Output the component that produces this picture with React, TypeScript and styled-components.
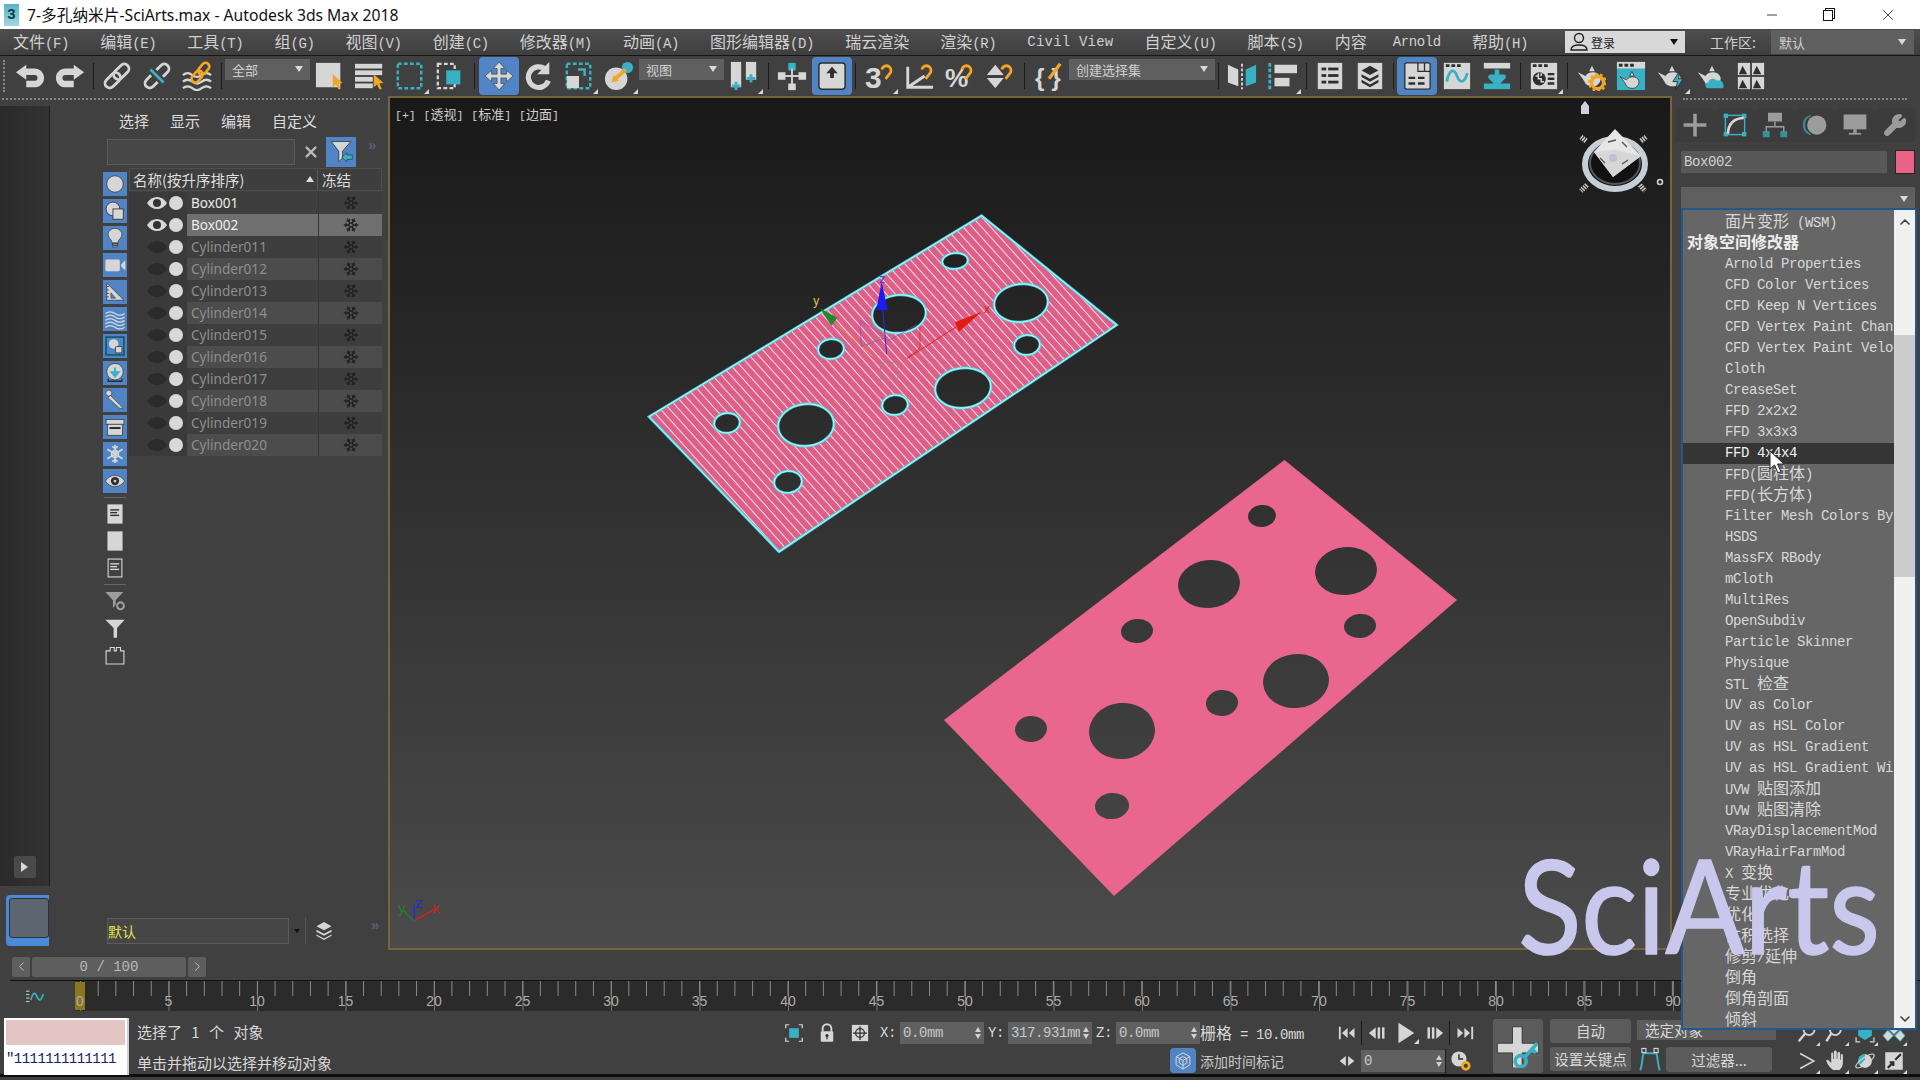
import React from "react";
import styled, { createGlobalStyle } from "styled-components";
import { ChevronDown, ChevronLeft, ChevronRight, ChevronUp, Minus, Snowflake, Wrench, X } from "lucide-react";

const L = "#d6d6d6";
const T = "#39b1c4";
const O = "#f2a527";
const D = "#2e2e2e";
const G = "#9c9c9c";

const cursor = (x: number, y: number) => (
  <path fill={O} d={`M${x} ${y}v14l3.5-3 2.5 5.5 2.5-1-2.5-5.5 4.5-.5z`} />
);
const hook = <path d="M19 9a5 5 0 1 1 8 5l-4 5" stroke={O} strokeWidth="3" fill="none" />;
const teapot = (fill: string) => (
  <g fill={fill}>
    <path d="M2 12l8 4c2-3 5-4 8-4 4 0 7 2 8 5 1 4-1 7-4 9-4 2-9 1-12-2-1-3-5-8-8-12z" />
    <path d="M14 11l3-6 3 6z" />
  </g>
);
const flake = (
  <g stroke={L} strokeWidth="2.4" fill="none">
    <path d="M16 3v26M5 9l22 14M27 9L5 23" />
    <circle cx="16" cy="16" r="5" />
    <path d="M12 5l4 3 4-3M12 27l4-3 4 3" />
  </g>
);
const docBars = (fill: string) => (
  <g fill={fill}>
    <rect x="9" y="9" width="13" height="2" />
    <rect x="9" y="13" width="10" height="2" />
    <rect x="9" y="17" width="13" height="2" />
  </g>
);

const glyphs: Record<string, React.ReactNode> = {
  undo: <path fill={L} d="M12 4L1 12l11 8v-5h9c2 0 3 1 3 3s-1 3-3 3H12v7h9c5 0 10-4 10-10S26 8 21 8h-9z" />,
  redo: <path fill={L} transform="matrix(-1 0 0 1 32 0)" d="M12 4L1 12l11 8v-5h9c2 0 3 1 3 3s-1 3-3 3H12v7h9c5 0 10-4 10-10S26 8 21 8h-9z" />,
  link: (
    <g transform="rotate(-45 16 16)" stroke={L} strokeWidth="3" fill="none">
      <rect x="0" y="11" width="19" height="10" rx="5" />
      <rect x="13" y="11" width="19" height="10" rx="5" />
    </g>
  ),
  unlink: (
    <g>
      <g transform="rotate(-45 16 16)" stroke={L} strokeWidth="3" fill="none">
        <path d="M12 11H5a5 5 0 0 0 0 10h7M20 11h7a5 5 0 0 1 0 10h-7" />
      </g>
      <path d="M9 9l14 14" stroke={T} strokeWidth="3" />
    </g>
  ),
  bind: (
    <g>
      <g stroke={L} strokeWidth="2.4" fill="none">
        <path d="M1 15q5-4 10 0t10 0 10 0M1 22q5-4 10 0t10 0 10 0M1 29q5-4 10 0t10 0 10 0" />
      </g>
      <g transform="rotate(-50 20 12)" stroke={O} strokeWidth="2.8" fill="none">
        <rect x="7" y="8" width="14" height="8" rx="4" />
        <rect x="18" y="8" width="14" height="8" rx="4" />
      </g>
    </g>
  ),
  select: (
    <g>
      <rect x="1" y="2" width="26" height="26" fill={L} />
      {cursor(19, 14)}
    </g>
  ),
  byName: (
    <g fill={L}>
      <rect x="0" y="3" width="29" height="5" />
      <rect x="0" y="10" width="29" height="5" />
      <rect x="0" y="17" width="19" height="5" />
      <rect x="0" y="24" width="19" height="5" />
      {cursor(20, 14)}
    </g>
  ),
  region: <rect x="3" y="3" width="25" height="26" fill="none" stroke={T} strokeWidth="2.6" strokeDasharray="4 2.5" />,
  crossing: (
    <g>
      <rect x="3" y="3" width="18" height="26" fill="none" stroke={L} strokeWidth="2.4" strokeDasharray="4 2.5" />
      <rect x="12" y="10" width="15" height="15" fill={T} />
    </g>
  ),
  move: (
    <path
      fill={L}
      stroke={D}
      strokeWidth=".6"
      d="M16 1l6 7h-4v6h6v-4l7 6-7 6v-4h-6v6h4l-6 7-6-7h4v-6H8v4l-7-6 7-6v4h6V8h-4z"
    />
  ),
  rotate: (
    <g>
      <path d="M23 9a11 11 0 1 0 3 12" stroke={L} strokeWidth="5.5" fill="none" />
      <path d="M27 1v13H14z" fill={L} />
    </g>
  ),
  scale: (
    <g>
      <rect x="3" y="3" width="25" height="26" fill="none" stroke={T} strokeWidth="2.6" strokeDasharray="4 2.5" />
      <rect x="3" y="16" width="13" height="13" fill={L} />
      <path d="M15 9h7v7" fill="none" stroke={T} strokeWidth="2.6" />
    </g>
  ),
  placement: (
    <g>
      <circle cx="13" cy="19" r="12" fill={L} />
      <circle cx="25" cy="7" r="6" fill={T} />
      <path d="M23 9L11 20" stroke={O} strokeWidth="4" />
      <path d="M8 23l2-8 6 6z" fill={O} />
    </g>
  ),
  pivot: (
    <g>
      <rect x="2" y="1" width="11" height="27" fill={L} />
      <rect x="18" y="1" width="11" height="19" fill={L} />
      <path d="M7.5 22v9M3 26.5h9M23.5 14v9M19 18.5h9" stroke={T} strokeWidth="3" />
    </g>
  ),
  manip: (
    <g fill={L}>
      <rect x="12" y="2" width="8" height="8" fill={T} />
      <rect x="1" y="12" width="8" height="8" />
      <rect x="23" y="12" width="8" height="8" />
      <rect x="12" y="24" width="8" height="7" />
      <rect x="15" y="8" width="2" height="18" />
      <rect x="7" y="15" width="18" height="2" />
    </g>
  ),
  keyboard: (
    <g>
      <rect x="2" y="2" width="28" height="28" rx="3" fill={L} stroke={D} strokeWidth="1.6" />
      <path d="M16 6l6 7h-4v5h-4v-5h-4z" fill={D} />
    </g>
  ),
  snap: (
    <g>
      <text x="1" y="29" fontSize="32" fontWeight="700" fontFamily="Liberation Sans" fill={L}>3</text>
      {hook}
    </g>
  ),
  angle: (
    <g>
      <path d="M4 6v22h27M4 28l18-12" stroke={L} strokeWidth="3" fill="none" />
      {hook}
    </g>
  ),
  percent: (
    <g>
      <text x="1" y="28" fontSize="28" fontWeight="700" fontFamily="Liberation Sans" fill={L}>%</text>
      {hook}
    </g>
  ),
  spinner: (
    <g fill={L}>
      <path d="M3 15l9-11 9 11zM3 18h18l-9 11z" />
      {hook}
    </g>
  ),
  named: (
    <g>
      <text x="1" y="27" fontSize="26" fontWeight="700" fontFamily="Liberation Sans" fill={L}>{"{ }"}</text>
      <path d="M16 19L28 3" stroke={O} strokeWidth="3.5" />
    </g>
  ),
  mirror: (
    <g>
      <path d="M1 4l11 5v18l-11-4z" fill={L} />
      <path d="M16 3v27" stroke={L} strokeWidth="2" strokeDasharray="3 2" />
      <path d="M20 9l11-5v19l-11 4z" fill={T} />
    </g>
  ),
  align: (
    <g>
      <path d="M3 2v28" stroke={T} strokeWidth="3" strokeDasharray="4 2" />
      <rect x="8" y="4" width="24" height="9" fill={L} />
      <rect x="8" y="18" width="16" height="9" fill={L} />
    </g>
  ),
  explorer: (
    <g>
      <rect x="3" y="2" width="26" height="28" fill={L} />
      <g fill={D}>
        <rect x="7" y="7" width="5" height="3" />
        <rect x="14" y="7" width="11" height="3" />
        <rect x="7" y="14" width="5" height="3" />
        <rect x="14" y="14" width="11" height="3" />
        <rect x="7" y="21" width="5" height="3" />
        <rect x="14" y="21" width="11" height="3" />
      </g>
    </g>
  ),
  layers: (
    <g>
      <rect x="3" y="2" width="26" height="28" fill={L} />
      <path d="M16 5l9 5-9 5-9-5zM7 14l9 5 9-5v3l-9 5-9-5zM7 20l9 5 9-5v3l-9 5-9-5z" fill={D} />
    </g>
  ),
  ribbon: (
    <g>
      <rect x="3" y="2" width="27" height="28" rx="2" fill={L} stroke={D} strokeWidth="1.4" />
      <path d="M17 2v9h13M24 2v9" stroke={D} strokeWidth="1.4" fill="none" />
      <path d="M7 18h7M17 18h7M7 24h7M17 24h7" stroke={D} strokeWidth="2.6" />
    </g>
  ),
  curve: (
    <g>
      <rect x="2" y="2" width="28" height="28" fill={L} />
      <path d="M4 5h4M10 5h4M16 5h4" stroke={D} strokeWidth="3" />
      <path d="M5 22c3-14 8-14 11-6s8 8 11-3" stroke={T} strokeWidth="3" fill="none" />
    </g>
  ),
  schematic: (
    <g>
      <rect x="2" y="2" width="28" height="6" fill={L} />
      <path d="M16 9l0 8m-7 0h14l-7 7z" stroke={T} strokeWidth="5" fill={T} strokeLinejoin="round" />
      <rect x="2" y="24" width="28" height="6" fill={T} />
    </g>
  ),
  material: (
    <g>
      <rect x="2" y="2" width="28" height="28" fill={L} />
      <path d="M4 5h4M10 5h4M16 5h4" stroke={D} strokeWidth="3" />
      <circle cx="11" cy="19" r="7" fill={D} />
      <path d="M7 16h3v3h3v3h3M10 13v3M13 13v3" stroke={L} strokeWidth="1.6" fill="none" />
      <path d="M20 14h7M20 19h7M20 24h7" stroke={D} strokeWidth="2.6" />
    </g>
  ),
  renderSetup: (
    <g>
      {teapot(L)}
      <circle cx="23" cy="23" r="6.5" fill="none" stroke={O} strokeWidth="3.6" />
      <circle cx="23" cy="23" r="9" fill="none" stroke={O} strokeWidth="2" strokeDasharray="3 2.6" />
    </g>
  ),
  framebuffer: (
    <g>
      <rect x="1" y="1" width="30" height="30" fill={T} />
      <rect x="1" y="1" width="30" height="7" fill={L} />
      <path d="M3 4.5h4M9 4.5h4M15 4.5h4" stroke={D} strokeWidth="3" />
      <g transform="translate(3 7) scale(.82)" stroke={D} strokeWidth="1">{teapot(L)}</g>
    </g>
  ),
  renderProd: (
    <g>
      {teapot(L)}
      <path d="M25 11l-7 11h5l-2 9 8-12h-5z" fill={T} stroke={D} />
    </g>
  ),
  renderCloud: (
    <g>
      {teapot(L)}
      <path d="M13 29c-4 0-4-6 0-6 1-5 7-5 9-2 4-2 9 2 7 8z" fill={T} />
    </g>
  ),
  gallery: (
    <g>
      <g fill={L}>
        <rect x="2" y="2" width="13" height="13" />
        <rect x="17" y="2" width="13" height="13" />
        <rect x="2" y="17" width="13" height="13" />
        <rect x="17" y="17" width="13" height="13" />
      </g>
      <path d="M3 14l4-9 5 9zM18 14l4-9 5 9zM3 29l4-9 5 9zM18 29l4-9 5 9z" fill={D} />
    </g>
  ),
  create: <path d="M14 3h4v11h11v4H18v11h-4V18H3v-4h11z" fill={G} />,
  modify: (
    <g>
      <rect x="5" y="5" width="22" height="22" fill="none" stroke={T} strokeWidth="1.6" />
      <g fill={T}>
        <rect x="3" y="3" width="5" height="5" />
        <rect x="24" y="3" width="5" height="5" />
        <rect x="3" y="24" width="5" height="5" />
        <rect x="24" y="24" width="5" height="5" />
      </g>
      <path d="M8 26C8 15 15 8 26 8" stroke={L} strokeWidth="3" fill="none" />
    </g>
  ),
  hierarchy: (
    <g>
      <rect x="8" y="2" width="16" height="10" fill={G} />
      <path d="M16 12v6M6 24v-6h20v6" stroke={G} strokeWidth="1.6" fill="none" />
      <rect x="2" y="23" width="8" height="7" fill={T} opacity=".7" />
      <rect x="22" y="23" width="8" height="7" fill={T} opacity=".7" />
    </g>
  ),
  motion: (
    <g>
      <path d="M11 5a12 12 0 0 0 0 22M7 7a12 12 0 0 0 0 18" stroke={T} strokeWidth="1.6" fill="none" opacity=".7" />
      <circle cx="18" cy="16" r="11" fill={G} />
    </g>
  ),
  display: (
    <g fill={G}>
      <rect x="3" y="4" width="26" height="17" />
      <rect x="14" y="21" width="4" height="4" />
      <rect x="9" y="25" width="14" height="2" />
    </g>
  ),
  geometry: <circle cx="16" cy="16" r="12" fill={L} stroke={D} strokeWidth="1" />,
  shapes: (
    <g stroke={D} strokeWidth="1.2">
      <circle cx="13" cy="13" r="10" fill={L} />
      <rect x="13" y="13" width="15" height="15" fill={L} />
    </g>
  ),
  light: (
    <g fill={L} stroke={D} strokeWidth="1">
      <path d="M16 2c6 0 10 4 10 9 0 5-5 7-6 12h-8c-1-5-6-7-6-12 0-5 4-9 10-9z" />
      <rect x="12" y="24" width="8" height="2" />
      <rect x="13" y="27" width="6" height="2" />
    </g>
  ),
  camera: (
    <g fill={L}>
      <rect x="2" y="8" width="21" height="17" rx="2" />
      <path d="M25 15l6-6v15l-6-6z" />
    </g>
  ),
  helper: (
    <g>
      <path d="M4 3l25 25H4z" fill={L} stroke={D} strokeWidth="1" />
      <path d="M10 17l7 8h-7z" fill="#5184c5" stroke={D} strokeWidth=".8" />
      <path d="M4 8h3M4 13h3M4 18h3M4 23h3" stroke={D} strokeWidth="1.2" />
    </g>
  ),
  warp: (
    <g stroke={L} strokeWidth="1.8" fill="none">
      <path d="M2 8q7-5 14 0t14 0M2 13q7-5 14 0t14 0M2 18q7-5 14 0t14 0M2 23q7-5 14 0t14 0M2 28q7-5 14 0t14 0" />
    </g>
  ),
  groups: (
    <g>
      <rect x="3" y="3" width="26" height="26" fill="none" stroke="#0d5c6a" strokeWidth="2.4" />
      <circle cx="14" cy="13" r="7" fill={L} />
      <rect x="17" y="17" width="9" height="9" fill={L} stroke={D} />
    </g>
  ),
  xrefs: (
    <g>
      <circle cx="16" cy="14" r="12" fill={L} stroke={D} />
      <path d="M16 8v7m-5 0h10l-5 6z" stroke={T} strokeWidth="3" fill={T} />
      <path d="M6 24v4h20v-4" stroke={D} strokeWidth="2" fill="none" />
    </g>
  ),
  bones: (
    <g>
      <circle cx="7" cy="6" r="4.5" fill={L} stroke={D} />
      <path d="M9 9l19 19-5 0L6 13z" fill={L} stroke={D} strokeWidth=".8" />
    </g>
  ),
  container: (
    <g>
      <rect x="3" y="5" width="26" height="7" fill={L} stroke={D} />
      <rect x="5" y="12" width="22" height="16" fill={L} stroke={D} />
      <rect x="8" y="16" width="16" height="3" fill={D} />
    </g>
  ),
  frozen: flake,
  hidden: (
    <g>
      <path d="M2 16c7-11 21-11 28 0-7 11-21 11-28 0z" fill={L} stroke={D} />
      <circle cx="16" cy="16" r="6" fill={D} />
      <circle cx="16" cy="16" r="2" fill={L} />
    </g>
  ),
  docFill: (
    <g>
      <rect x="5" y="2" width="22" height="28" fill={L} />
      {docBars(D)}
    </g>
  ),
  blank: <rect x="5" y="2" width="22" height="28" fill={L} />,
  docOutline: (
    <g>
      <rect x="6" y="3" width="20" height="26" fill="none" stroke={L} strokeWidth="1.6" />
      {docBars(L)}
    </g>
  ),
  funnelGear: (
    <g fill={G}>
      <path d="M2 3h26L17 15v6l-4 5V15z" />
      <circle cx="24" cy="23" r="5" fill="none" stroke={G} strokeWidth="3" />
    </g>
  ),
  funnel: <path d="M2 4h28L19 16v14h-5V16z" fill={L} />,
  puzzle: <path d="M3 10h6V5h6v5h3V5h6v5h5v19H3z" fill="none" stroke={L} strokeWidth="1.6" />,
  filterPick: (
    <g>
      <path d="M3 2h26L18 15v9l-5 5V15z" fill={L} stroke={D} strokeWidth="1" />
      <path d="M17 23l7-6v3h7v6h-7v3z" fill={T} stroke={D} strokeWidth=".8" />
    </g>
  ),
  stack: <path d="M16 3l11 6-11 6-11-6zM5 14l11 6 11-6v3l-11 6-11-6zM5 21l11 6 11-6v2l-11 6-11-6z" fill={L} />,
  wave: (
    <g>
      <path d="M3 9h5M3 14h5M3 19h5M3 24h5" stroke={L} strokeWidth="1.4" />
      <path d="M10 22c3-12 6-12 9-5s6 6 9-4" stroke={T} strokeWidth="2.4" fill="none" />
    </g>
  ),
  isolate: (
    <g>
      <path d="M4 9V4h5M23 4h5v5M28 23v5h-5M9 28H4v-5" stroke={L} strokeWidth="1.8" fill="none" />
      <rect x="9" y="9" width="14" height="14" fill={T} />
    </g>
  ),
  lock: (
    <g>
      <path d="M9 14V9a7 7 0 0 1 14 0v5" stroke={L} strokeWidth="3" fill="none" />
      <rect x="6" y="13" width="20" height="17" rx="2" fill={L} />
      <circle cx="16" cy="20" r="2.4" fill={D} />
      <rect x="15" y="20" width="2" height="6" fill={D} />
    </g>
  ),
  absolute: (
    <g>
      <rect x="3" y="3" width="26" height="26" fill={L} />
      <circle cx="16" cy="16" r="7" fill="none" stroke={D} strokeWidth="2" />
      <path d="M16 5v22M5 16h22" stroke={D} strokeWidth="2" />
    </g>
  ),
  timeTag: (
    <g fill="none" stroke={L} strokeWidth="1.6">
      <path d="M16 3l11 6v13l-11 7-11-7V9z" />
      <path d="M5 9l11 6 11-6M16 15v14M10 12l6-3 6 3v7l-6 4-6-4z" />
    </g>
  ),
  toStart: (
    <g fill={L}>
      <rect x="3" y="6" width="3" height="20" />
      <path d="M17 8v16l-9-8zM28 8v16l-9-8z" />
    </g>
  ),
  prevFrame: (
    <g fill={L}>
      <path d="M14 7v18L3 16z" />
      <rect x="17" y="7" width="4" height="18" />
      <rect x="24" y="7" width="4" height="18" />
    </g>
  ),
  play: <path d="M5 1v30l23-15z" fill={L} />,
  nextFrame: (
    <g fill={L}>
      <rect x="4" y="7" width="4" height="18" />
      <rect x="11" y="7" width="4" height="18" />
      <path d="M18 7v18l11-9z" />
    </g>
  ),
  toEnd: (
    <g fill={L}>
      <path d="M4 8v16l9-8zM15 8v16l9-8z" />
      <rect x="26" y="6" width="3" height="20" />
    </g>
  ),
  keyMode: <path d="M14 7v18L3 16zM18 7v18l11-9z" fill={L} />,
  timeConfig: (
    <g>
      <circle cx="13" cy="13" r="11" fill={L} />
      <path d="M13 6v7h6" stroke={D} strokeWidth="2" fill="none" />
      <circle cx="23" cy="23" r="5" fill="none" stroke={O} strokeWidth="4" />
    </g>
  ),
  bigKey: (
    <g>
      <path d="M12 2h7v12h12v7H19v11h-7V21H1v-7h11z" fill={L} stroke={D} strokeWidth=".6" />
      <g stroke={T} strokeWidth="2.6" fill="none">
        <circle cx="18" cy="27" r="4" />
        <path d="M21 24l9-10M26 18l3 3" />
      </g>
    </g>
  ),
  tangent: (
    <g stroke={T} strokeWidth="2.4" fill="none">
      <path d="M4 30c3-8 2-14 4-21h16c2 7 1 13 4 21" />
      <rect x="6" y="3" width="5" height="5" stroke={L} strokeWidth="1.4" />
      <rect x="21" y="3" width="5" height="5" stroke={L} strokeWidth="1.4" />
    </g>
  ),
  zoom: (
    <g>
      <circle cx="19" cy="11" r="8" fill="none" stroke={L} strokeWidth="2.6" />
      <path d="M13 17L4 28" stroke={L} strokeWidth="3.4" />
    </g>
  ),
  zoomAll: (
    <g>
      <circle cx="15" cy="11" r="8" fill="none" stroke={L} strokeWidth="2.6" />
      <path d="M9 17L2 28" stroke={L} strokeWidth="3.4" />
      <rect x="24" y="3" width="6" height="6" fill={T} />
    </g>
  ),
  zoomExt: (
    <g>
      <path d="M16 2l10 6v12l-10 6-10-6V8z" fill={T} />
      <path d="M3 22v7h6M29 22v7h-6" stroke={L} strokeWidth="1.8" fill="none" />
    </g>
  ),
  zoomExtAll: <path d="M16 2l8 8-8 8-8-8zM7 12l8 8-8 8-7-8zM25 12l7 8-7 8-8-8z" fill={L} stroke={T} strokeWidth="1.4" />,
  fov: <path d="M5 4l22 12L5 28" stroke={L} strokeWidth="2.4" fill="none" />,
  pan: (
    <path
      fill={L}
      d="M12 29c-4-2-9-9-10-13 0-2 2-2 3-1l4 4V6c0-3 3-3 3 0v7h1V3c0-3 4-3 4 0v10h1V5c0-3 4-3 4 0v9h1V8c0-3 3-3 3 0v11c0 4-2 8-5 10z"
    />
  ),
  orbit: (
    <g>
      <circle cx="16" cy="16" r="10" fill={L} />
      <path d="M16 6a10 10 0 0 0-8 16l8-8z" fill={T} />
      <ellipse cx="16" cy="16" rx="16" ry="5" transform="rotate(-35 16 16)" fill="none" stroke={L} strokeWidth="1.6" />
    </g>
  ),
  maximize: (
    <g>
      <rect x="2" y="2" width="28" height="28" fill={L} />
      <path d="M6 27l9-9m-6 0h6v6M27 5l-9 9" stroke={D} strokeWidth="3.4" fill="none" />
    </g>
  ),
};

const Icon: React.FC<{ name: string; size?: number }> = ({ name, size = 30 }) => (
  <svg width={size} height={size} viewBox="0 0 32 32">
    {glyphs[name]}
  </svg>
);

const GlobalStyle = createGlobalStyle`
  html, body {
    margin: 0;
    background: #404040;
  }
  * {
    box-sizing: border-box;
  }
`;

const Han = styled.span`
  font-family: "Noto Sans CJK SC", sans-serif;
  font-size: var(--han, 16px);
  letter-spacing: 0;
  line-height: 1;
`;

// old 3ds max menus mix 16px hanzi with half width latin, so the two get separate sizes
const Mixed: React.FC<{ text: string }> = ({ text }) => (
  <>
    {text.split(/([\u3400-\u9fff]+)/).map((part, i) =>
      /[\u3400-\u9fff]/.test(part) ? <Han key={i}>{part}</Han> : part
    )}
  </>
);

const Frame = styled.div`
  position: relative;
  width: 1920px;
  height: 1080px;
  overflow: hidden;
  display: flex;
  flex-direction: column;
  background: #404040;
  color: #d2d2d2;
`;

const TitleBar = styled.div`
  height: 29px;
  flex: none;
  background: #ffffff;
  display: flex;
  align-items: center;
  padding-left: 4px;
  color: #111111;
  font: 15.7px "Noto Sans", "Noto Sans CJK SC", sans-serif;
`;

const AppBadge = styled.div`
  width: 15px;
  height: 22px;
  margin-right: 8px;
  background: linear-gradient(#58b4c4, #9fd8e0);
  color: #10404c;
  font: 700 15px/20px "Liberation Sans", sans-serif;
  text-align: center;
`;

const WindowControls = styled.div`
  margin-left: auto;
  display: flex;
  margin-right: 3px;
`;

const WindowButton = styled.div`
  width: 58px;
  height: 29px;
  display: flex;
  align-items: center;
  justify-content: center;
`;

const RestoreGlyph = styled.div`
  width: 10px;
  height: 11px;
  margin-right: 4px;
  border: 1px solid #111111;
  box-shadow: 2px -2px 0 -1px #ffffff, 2px -2px 0 0 #111111;
  margin-top: 2px;
`;

const MenuBar = styled.div`
  height: 27px;
  flex: none;
  display: flex;
  align-items: center;
  padding-left: 13px;
  gap: 31.1px;
  background: linear-gradient(#4e4e4e, #3e3e3e);
  border-bottom: 1px solid #161616;
`;

const MenuItem = styled.div<{ $wide?: boolean; $tuck?: boolean }>`
  white-space: nowrap;
  color: #d0d0d0;
  font: 14px "Liberation Mono", monospace;
  letter-spacing: ${({ $wide }) => ($wide ? "0.2px" : "-0.4px")};
  margin-left: ${({ $tuck }) => ($tuck ? "-5px" : "0")};
`;

const MenuRight = styled.div`
  margin-left: auto;
  display: flex;
  align-items: center;
  margin-right: 6px;
`;

const LoginBox = styled.div`
  width: 120px;
  height: 22px;
  background: #d8d8d8;
  display: flex;
  align-items: center;
  padding: 0 7px 0 5px;
  gap: 3px;
  color: #222222;
  font: 12px "Noto Sans CJK SC", sans-serif;
  margin-right: 25px;
`;

const ArrowDown = styled.i<{ $color?: string }>`
  margin-left: auto;
  width: 0;
  height: 0;
  border-left: 4.5px solid transparent;
  border-right: 4.5px solid transparent;
  border-top: 6px solid ${({ $color }) => $color || "#d8d8d8"};
`;

const WorkspaceLabel = styled.div`
  font: 14px "Noto Sans CJK SC", sans-serif;
  color: #d0d0d0;
  margin-right: 3px;
  width: 58px;
  white-space: nowrap;
`;

const Combo = styled.div<{ $w: number; $h?: number }>`
  width: ${({ $w }) => $w}px;
  height: ${({ $h }) => $h || 22}px;
  flex: none;
  background: #5f5f5f;
  display: flex;
  align-items: center;
  padding: 0 8px;
  color: #cfcfcf;
  font: 13px "Noto Sans CJK SC", sans-serif;
`;

const ToolbarRow = styled.div`
  height: 40px;
  flex: none;
  display: flex;
  align-items: center;
  padding-left: 10px;
  background: #404040;
  position: relative;
`;

const Grip = styled.div`
  position: absolute;
  left: 3px;
  top: 4px;
  bottom: 4px;
  width: 4px;
  border-left: 2px dotted #8a8a8a;
`;

const ToolButton = styled.div<{ $on?: boolean; $fly?: boolean }>`
  width: 40px;
  height: 38px;
  flex: none;
  position: relative;
  display: flex;
  align-items: center;
  justify-content: center;
  border-radius: 4px;
  background: ${({ $on }) => ($on ? "#5184c5" : "transparent")};

  &::after {
    content: "";
    display: ${({ $fly }) => ($fly ? "block" : "none")};
    position: absolute;
    right: 1px;
    bottom: 1px;
    border-left: 5px solid transparent;
    border-bottom: 5px solid #d8d8d8;
  }
`;

const ToolSep = styled.div<{ $w: number }>`
  width: ${({ $w }) => $w}px;
  height: 26px;
  flex: none;
  display: flex;
  justify-content: center;

  &::before {
    content: "";
    width: 1px;
    background: #1c1c1c;
  }
`;

const ToolCombo = styled(Combo)`
  height: 21px;
  margin-top: -14px;
  padding: 0 7px;
`;

const Workspace = styled.div`
  height: 854px;
  flex: none;
  display: grid;
  grid-template-columns: 388px 1284px 248px;
`;

const LeftPanel = styled.div`
  display: flex;
  flex-direction: column;
  min-height: 0;
`;

const DottedRule = styled.div`
  height: 0;
  margin: 2px 8px 0 2px;
  border-top: 2px dotted #8a8a8a;
`;

const LeftBody = styled.div`
  flex: 1;
  display: flex;
  min-height: 0;
`;

const Rail = styled.div`
  width: 50px;
  flex: none;
  display: flex;
  flex-direction: column;
  padding-top: 6px;
`;

const RailStrip = styled.div`
  height: 780px;
  background: linear-gradient(90deg, #2a2a2a, #333333);
  border-right: 1px solid #1b1b1b;
  display: flex;
  flex-direction: column;
  justify-content: flex-end;
  align-items: center;
  padding-bottom: 8px;
`;

const RailPlay = styled.div`
  width: 22px;
  height: 22px;
  background: #4a4a4a;
  display: flex;
  align-items: center;
  justify-content: center;
  border-radius: 2px;

  &::before {
    content: "";
    border-left: 7px solid #d8d8d8;
    border-top: 5px solid transparent;
    border-bottom: 5px solid transparent;
  }
`;

const ViewPreview = styled.div`
  width: 43px;
  height: 51px;
  margin: 9px 0 0 6px;
  background: #4c8ad8;
  border-radius: 4px 0 0 4px;
  padding: 3px 2px 10px 3px;

  &::before {
    content: "";
    display: block;
    width: 100%;
    height: 100%;
    background: #5c6570;
    border: 1px solid #2b3340;
    border-radius: 3px;
  }
`;

const Explorer = styled.div`
  flex: 1;
  min-width: 0;
  display: flex;
  flex-direction: column;
  padding-left: 53px;
`;

const ExplorerMenu = styled.div`
  display: flex;
  gap: 21px;
  padding: 10px 0 0 16px;
  height: 37px;
  color: #dcdcdc;
  font: 15px "Noto Sans CJK SC", sans-serif;
`;

const SearchRow = styled.div`
  display: flex;
  align-items: center;
  height: 30px;
  padding-left: 4px;
`;

const SearchInput = styled.div`
  width: 188px;
  height: 26px;
  background: #474747;
  border: 1px solid #5a5a5a;
`;

const ClearGlyph = styled.div`
  width: 31px;
  display: flex;
  justify-content: center;
  color: #bdbdbd;
`;

const FilterButton = styled.div`
  width: 30px;
  height: 30px;
  background: #5184c5;
  display: flex;
  align-items: center;
  justify-content: center;
`;

const Chevrons = styled.div<{ $gap: number }>`
  align-self: flex-start;
  font: 700 15px/16px "Liberation Sans", sans-serif;
  color: #55607a;
  margin-left: ${({ $gap }) => $gap}px;
`;

const TreeRow = styled.div`
  display: flex;
  gap: 2px;
  padding-top: 1px;
`;

const ToolColumn = styled.div`
  width: 24px;
  flex: none;
  display: flex;
  flex-direction: column;
  padding-top: 4px;
  gap: 3px;
`;

const CategoryButton = styled.div`
  width: 24px;
  height: 24px;
  flex: none;
  background: #5184c5;
  display: flex;
  align-items: center;
  justify-content: center;
`;

const PlainCategory = styled.div`
  width: 24px;
  height: 24px;
  flex: none;
  display: flex;
  align-items: center;
  justify-content: center;
`;

const CategoryRule = styled.div`
  height: 1px;
  margin: 1px 1px;
  background: #666666;
  flex: none;
`;

const SceneTable = styled.div`
  width: 253px;
  flex: none;
`;

const TableHeader = styled.div`
  height: 23px;
  margin-bottom: 1px;
  display: flex;
  align-items: center;
  background: #3e3e3e;
  border: 1px solid #4e4e4e;
  color: #dedede;
  font: 14.5px "Noto Sans CJK SC", sans-serif;
`;

const HeaderName = styled.div`
  flex: 1;
  padding-left: 3px;
  position: relative;
  white-space: nowrap;

  &::after {
    content: "";
    position: absolute;
    right: 3px;
    top: 7px;
    border-left: 4px solid transparent;
    border-right: 4px solid transparent;
    border-bottom: 6px solid #dedede;
  }
`;

const HeaderFreeze = styled.div`
  width: 64px;
  padding-left: 4px;
  border-left: 1px solid #5a5a5a;
`;

const SceneRow = styled.div<{ $alt?: boolean; $selected?: boolean; $frozen?: boolean }>`
  height: 22px;
  display: flex;
  background: ${({ $selected, $alt }) => ($selected ? "#6f6f6f" : $alt ? "#4c4c4c" : "#3e3e3e")};
  color: ${({ $frozen }) => ($frozen ? "#8e8e8e" : "#eeeeee")};
  font: 13.6px/22px "Noto Sans", sans-serif;
`;

const RowControls = styled.div`
  width: 58px;
  flex: none;
  background: #3a3a3a;
  display: flex;
  align-items: center;
  padding-left: 18px;
  gap: 2px;
`;

const Sphere = styled.i`
  width: 14px;
  height: 14px;
  border-radius: 50%;
  background: #d8d8d8;
`;

const RowName = styled.div`
  flex: 1;
  padding-left: 4px;
`;

const RowFreeze = styled.div`
  width: 64px;
  flex: none;
  border-left: 1px solid #353535;
  display: flex;
  align-items: center;
  justify-content: center;
`;

const LayerFooter = styled.div`
  margin-top: auto;
  margin-bottom: 6px;
  display: flex;
  align-items: center;
  padding-left: 4px;
  height: 27px;
`;

const LayerInput = styled.div`
  width: 182px;
  height: 26px;
  background: #464646;
  border: 1px solid #5c5c5c;
  color: #e0e048;
  font: 14px/24px "Noto Sans CJK SC", sans-serif;
`;

const LayerArrow = styled.div`
  width: 17px;
  height: 27px;
  display: flex;
  align-items: center;
  justify-content: center;
  border-right: 1px solid #565656;

  &::before {
    content: "";
    border-left: 3px solid transparent;
    border-right: 3px solid transparent;
    border-top: 4px solid #111111;
  }
`;

const LayerIcon = styled.div`
  width: 36px;
  display: flex;
  justify-content: center;
`;

const Viewport = styled.div`
  position: relative;
  border: 2px solid #75643c;
  background: linear-gradient(#191919, #4b4b4b);
`;

const ViewportArt = styled.svg`
  position: absolute;
  left: -2px;
  top: -2px;
`;

const ViewportLabel = styled.div`
  --han: 13px;
  position: absolute;
  left: 5px;
  top: 9px;
  color: #cfcfcf;
  font: 11.5px "Liberation Mono", monospace;
  word-spacing: 1px;
`;

const CommandPanel = styled.div`
  position: relative;
  display: flex;
  flex-direction: column;
  padding: 0 5px 0 9px;
`;

const CommandTabs = styled.div`
  height: 34px;
  margin: 8px 0 0 -6px;
  display: flex;
`;

const CommandTab = styled.div`
  width: 40px;
  background: #3c3c3c;
  border-radius: 6px 6px 0 0;
  display: flex;
  align-items: center;
  justify-content: center;
`;

const NameRow = styled.div`
  display: flex;
  justify-content: space-between;
  margin-top: 9px;
`;

const NameField = styled.div`
  width: 206px;
  height: 22px;
  background: #585858;
  padding-left: 3px;
  color: #cfcfcf;
  font: 14px/22px "Liberation Mono", monospace;
  letter-spacing: -0.4px;
`;

const Swatch = styled.div`
  width: 20px;
  height: 24px;
  margin-top: -1px;
  background: #e96389;
  border: 1px solid #262626;
`;

const ModifierCombo = styled.div`
  height: 23px;
  margin-top: 13px;
  background: #5f5f5f;
  display: flex;
  align-items: center;
  padding-right: 7px;
`;

const ModifierList = styled.div`
  position: absolute;
  z-index: 5;
  left: 9px;
  top: 112px;
  width: 236px;
  height: 822px;
  background: #666666;
  border: 2px solid #23588c;
  display: flex;
`;

const ModifierRows = styled.div`
  flex: 1;
  min-width: 0;
  overflow: hidden;
  padding-top: 2px;
`;

const ModifierRow = styled.div<{ $hot?: boolean; $category?: boolean }>`
  height: 21px;
  padding-left: ${({ $category }) => ($category ? "4px" : "42px")};
  background: ${({ $hot }) => ($hot ? "#353535" : "transparent")};
  color: ${({ $hot, $category }) => ($hot ? "#f2f2f2" : $category ? "#ececec" : "#d8d8d8")};
  font: ${({ $category }) => ($category ? 700 : 400)} 14px/21px "Liberation Mono", monospace;
  letter-spacing: -0.4px;
  white-space: nowrap;
`;

const ScrollBar = styled.div`
  width: 21px;
  flex: none;
  background: #f0f0f0;
  display: flex;
  flex-direction: column;
  align-items: center;
  color: #404040;
`;

const ScrollThumb = styled.div`
  width: 100%;
  height: 242px;
  margin-top: 104px;
  background: #cdcdcd;
`;

const ScrollEnd = styled.div`
  margin-top: auto;
  height: 17px;
`;

const ScrollStart = styled.div`
  height: 17px;
  margin-top: 4px;
`;

const Pointer = styled.svg`
  position: absolute;
  z-index: 6;
  left: 97px;
  top: 354px;
`;

const TimelineWrap = styled.div`
  height: 62px;
  flex: none;
  display: flex;
  flex-direction: column;
`;

const SliderRow = styled.div`
  height: 31px;
  display: flex;
  align-items: center;
  padding: 3px 0 0 2px;
  gap: 2px;
  border-bottom: 1px solid #101010;
  margin-left: 10px;
`;

const SliderEnd = styled.div`
  width: 18px;
  height: 20px;
  background: #5e5e5e;
  border-radius: 2px;
  display: flex;
  align-items: center;
  justify-content: center;
  color: #c8c8c8;
`;

const SliderBar = styled.div`
  width: 154px;
  height: 20px;
  background: #5e5e5e;
  border-radius: 2px;
  text-align: center;
  color: #b8b8b8;
  font: 14px/20px "Liberation Mono", monospace;
  white-space: pre;
`;

const RulerRow = styled.div`
  height: 30px;
  display: flex;
`;

const RulerLead = styled.div`
  width: 75px;
  flex: none;
  display: flex;
  align-items: center;
  padding-left: 24px;
`;

const RulerTrack = styled.div`
  position: relative;
  width: 1615px;
  flex: none;
  overflow: hidden;
  background: linear-gradient(90deg, #8a8a8a 1px, transparent 1px) 5px 0 / 17.7px 15px repeat-x,
    linear-gradient(90deg, #777777 1px, transparent 1px) 5px 0 / 88.5px 30px repeat-x, #2b2b2b;
`;

const RulerThumb = styled.div`
  position: absolute;
  left: 0;
  top: 1px;
  width: 10px;
  height: 28px;
  background: #8a7720;
`;

const RulerLabels = styled.div`
  position: relative;
  display: flex;
  margin-left: -39.25px;
`;

const RulerLabel = styled.div`
  width: 88.5px;
  flex: none;
  text-align: center;
  padding-top: 11px;
  color: #adadad;
  font: 14px/18px "Liberation Sans", sans-serif;
`;

const StatusBar = styled.div`
  height: 65px;
  flex: none;
  display: flex;
  border-bottom: 3px solid #0d0d0d;
  padding-top: 6px;
`;

const Listener = styled.div`
  width: 125px;
  height: 57px;
  flex: none;
  margin-left: 4px;
  background: #ffffff;
  border-right: 2px solid #cfcfcf;
  padding: 2px;
  display: flex;
  flex-direction: column;
  gap: 2px;
`;

const ListenerTop = styled.div`
  height: 25px;
  background: #e3c5c3;
`;

const ListenerBottom = styled.div`
  flex: 1;
  color: #16206a;
  font: 14px/24px "Liberation Mono", monospace;
  letter-spacing: -0.55px;
  white-space: nowrap;
`;

const Prompt = styled.div`
  width: 648px;
  flex: none;
  padding-left: 8px;
  display: flex;
  flex-direction: column;
  gap: 10px;
  padding-top: 3px;
  color: #d8d8d8;
  font: 15px/21px "Noto Sans CJK SC", sans-serif;
  word-spacing: 6px;
`;

const CoordColumn = styled.div`
  width: 526px;
  flex: none;
  display: flex;
  flex-direction: column;
`;

const CoordRow = styled.div`
  height: 24px;
  margin-top: 3px;
  display: flex;
  align-items: center;
`;

const CoordIcon = styled.div`
  width: 33px;
  flex: none;
  display: flex;
  justify-content: center;
`;

const AxisLabel = styled.div`
  width: 20px;
  flex: none;
  margin-left: 4px;
  font: 14px "Liberation Mono", monospace;
  letter-spacing: -0.4px;
  color: #d8d8d8;
`;

const SpinInput = styled.div`
  width: 84px;
  height: 22px;
  flex: none;
  background: #606060;
  display: flex;
  align-items: center;
  padding-left: 3px;
  color: #c8c8c8;
  font: 14px "Liberation Mono", monospace;
  letter-spacing: -0.4px;
  overflow: hidden;
  white-space: nowrap;
`;

const SpinText = styled.div`
  flex: 1;
  min-width: 0;
  overflow: hidden;
`;

const SpinArrows = styled.div`
  width: 12px;
  flex: none;
  display: flex;
  flex-direction: column;
  align-items: center;
  gap: 2px;

  &::before,
  &::after {
    content: "";
    border-left: 3px solid transparent;
    border-right: 3px solid transparent;
  }
  &::before {
    border-bottom: 5px solid #d0d0d0;
  }
  &::after {
    border-top: 5px solid #d0d0d0;
  }
`;

const GridText = styled.div`
  margin-left: 0;
  color: #d8d8d8;
  font: 14px "Liberation Mono", monospace;
  letter-spacing: -0.4px;
  white-space: pre;
`;

const TagRow = styled.div`
  display: flex;
  align-items: center;
  padding-left: 393px;
  margin-top: 3px;
  height: 25px;
  color: #c8c8c8;
  font: 14px "Noto Sans CJK SC", sans-serif;
  white-space: nowrap;
`;

const TagButton = styled.div`
  width: 26px;
  height: 25px;
  margin-right: 4px;
  background: #5184c5;
  border-radius: 4px;
  display: flex;
  align-items: center;
  justify-content: center;
`;

const PlaybackColumn = styled.div`
  width: 161px;
  flex: none;
  margin-left: 29px;
`;

const PlaybackRow = styled.div`
  height: 26px;
  margin-top: 2px;
  display: flex;
  align-items: center;
`;

const PlayButton = styled.div<{ $w?: number; $fly?: boolean }>`
  width: ${({ $w }) => $w || 29}px;
  flex: none;
  position: relative;
  display: flex;
  justify-content: center;

  &::after {
    content: "";
    display: ${({ $fly }) => ($fly ? "block" : "none")};
    position: absolute;
    right: 1px;
    bottom: 0;
    border-left: 5px solid transparent;
    border-bottom: 5px solid #d8d8d8;
  }
`;

const PlayDivider = styled.div`
  width: 1px;
  height: 24px;
  flex: none;
  background: #1c1c1c;
`;

const BigKeyButton = styled.div`
  width: 50px;
  height: 54px;
  flex: none;
  margin: 1px 7px 0 0;
  background: #5c5c5c;
  border-radius: 3px;
  display: flex;
  align-items: center;
  justify-content: center;
`;

const KeyColumn = styled.div`
  width: 81px;
  flex: none;
  display: flex;
  flex-direction: column;
  gap: 4px;
  margin-top: 1px;
`;

const KeyButton = styled.div`
  height: 24px;
  background: #5c5c5c;
  border-radius: 3px;
  text-align: center;
  color: #d8d8d8;
  font: 14.5px/24px "Noto Sans CJK SC", sans-serif;
  white-space: nowrap;
`;

const KeyRight = styled.div`
  width: 146px;
  flex: none;
  margin-left: 6px;
`;

const KeyTarget = styled.div`
  width: 139px;
  height: 20px;
  margin-top: 2px;
  background: #5c5c5c;
  padding-left: 8px;
  color: #d8d8d8;
  font: 14.5px/20px "Noto Sans CJK SC", sans-serif;
`;

const KeyFilterRow = styled.div`
  display: flex;
  align-items: center;
  margin-top: 6px;
`;

const KeyFilter = styled.div`
  width: 106px;
  height: 25px;
  margin-left: 3px;
  background: #5c5c5c;
  border-radius: 3px;
  text-align: center;
  color: #d8d8d8;
  font: 14.5px/25px "Noto Sans CJK SC", sans-serif;
  white-space: nowrap;
`;

const NavGrid = styled.div`
  display: grid;
  grid-template-columns: repeat(4, 29px);
  grid-auto-rows: 26px;
  margin-left: 9px;
  margin-top: 2px;
  row-gap: 2px;
`;

const NavButton = styled.div`
  position: relative;
  display: flex;
  align-items: center;
  justify-content: center;

  &::after {
    content: "";
    position: absolute;
    right: 1px;
    bottom: 0;
    border-left: 4px solid transparent;
    border-bottom: 4px solid #d8d8d8;
  }
`;

const Watermark = styled.svg`
  position: absolute;
  z-index: 10;
  left: 1500px;
  top: 840px;
  pointer-events: none;
`;

const MENU = [
  "文件(F)",
  "编辑(E)",
  "工具(T)",
  "组(G)",
  "视图(V)",
  "创建(C)",
  "修改器(M)",
  "动画(A)",
  "图形编辑器(D)",
  "瑞云渲染",
  "渲染(R)",
  "Civil View",
  "自定义(U)",
  "脚本(S)",
  "内容",
  "Arnold",
  "帮助(H)",
];

const ROWS = [
  "Box001",
  "Box002",
  "Cylinder011",
  "Cylinder012",
  "Cylinder013",
  "Cylinder014",
  "Cylinder015",
  "Cylinder016",
  "Cylinder017",
  "Cylinder018",
  "Cylinder019",
  "Cylinder020",
];

const CATEGORIES = [
  "geometry",
  "shapes",
  "light",
  "camera",
  "helper",
  "warp",
  "groups",
  "xrefs",
  "bones",
  "container",
  "frozen",
  "hidden",
];

const MODIFIERS = [
  "面片变形 (WSM)",
  "对象空间修改器",
  "Arnold Properties",
  "CFD Color Vertices",
  "CFD Keep N Vertices",
  "CFD Vertex Paint Channel",
  "CFD Vertex Paint Velocity",
  "Cloth",
  "CreaseSet",
  "FFD 2x2x2",
  "FFD 3x3x3",
  "FFD 4x4x4",
  "FFD(圆柱体)",
  "FFD(长方体)",
  "Filter Mesh Colors By",
  "HSDS",
  "MassFX RBody",
  "mCloth",
  "MultiRes",
  "OpenSubdiv",
  "Particle Skinner",
  "Physique",
  "STL 检查",
  "UV as Color",
  "UV as HSL Color",
  "UV as HSL Gradient",
  "UV as HSL Gradient With",
  "UVW 贴图添加",
  "UVW 贴图清除",
  "VRayDisplacementMod",
  "VRayHairFarmMod",
  "X 变换",
  "专业优化",
  "优化",
  "体积选择",
  "修剪/延伸",
  "倒角",
  "倒角剖面",
  "倾斜",
];

type Hole = [number, number, number, number];

// page coordinates, read off the screenshot
const HOLES_A: Hole[] = [
  [955, 261, 13, 8],
  [1021, 303, 27, 19],
  [1027, 345, 13, 10],
  [899, 314, 27, 19],
  [831, 349, 13, 10],
  [963, 388, 28, 20],
  [895, 405, 13, 10],
  [727, 423, 13, 10],
  [806, 425, 28, 21],
  [788, 482, 14, 11],
];

const HOLES_B: Hole[] = [
  [1262, 516, 14, 11],
  [1346, 571, 31, 24],
  [1360, 626, 16, 12],
  [1209, 584, 31, 24],
  [1137, 631, 16, 12],
  [1296, 681, 33, 27],
  [1222, 703, 16, 13],
  [1031, 729, 16, 13],
  [1122, 731, 33, 28],
  [1112, 806, 17, 13],
];

const ringPath = ([cx, cy, rx, ry]: Hole) => {
  const a = (-6 * Math.PI) / 180;
  const dx = rx * Math.cos(a);
  const dy = rx * Math.sin(a);
  return `M${cx - dx} ${cy - dy}A${rx} ${ry} -6 1 0 ${cx + dx} ${cy + dy}A${rx} ${ry} -6 1 0 ${cx - dx} ${cy - dy}Z`;
};

const PLATE_A = "M981.7 215.7L1116.7 325L779 551.7L649 416.7Z";
const PLATE_B = "M1284.5 460L1457 600L1114 896L944 720Z";
const plateA = PLATE_A + HOLES_A.map(ringPath).join("");
const plateB = PLATE_B + HOLES_B.map(ringPath).join("");

const Scene: React.FC = () => (
  <ViewportArt width="1284" height="854" viewBox="388 96 1284 854">
    <defs>
      <pattern id="hatch" width="6.8" height="6.8" patternUnits="userSpaceOnUse" patternTransform="rotate(48)">
        <rect y="0" width="6.8" height="1" fill="#ffffff" opacity=".8" />
      </pattern>
    </defs>
    <path d={plateB} fill="#e9678f" fillRule="evenodd" />
    <path d={plateA} fill="#dd5f87" fillRule="evenodd" />
    <path d={plateA} fill="url(#hatch)" fillRule="evenodd" />
    <path d={plateA} fill="none" stroke="#45dbe4" strokeWidth="2.6" />
    <path d={plateA} fill="none" stroke="#ffffff" strokeWidth=".7" />

    {/* move gizmo, drawn in the coordinates of the zoomed crop */}
    <g transform="translate(620 200) scale(.3333)" fill="none">
      <path d="M648 372L760 470" stroke="#d9a24a" strokeWidth="3" />
      <path d="M600 325l52 28-18 24z" fill="#1e8a2a" />
      <text x="580" y="315" fill="#d8c84a" fontSize="36" fontFamily="Liberation Sans">y</text>
      <path d="M800 462L786 300" stroke="#2a2ae0" strokeWidth="3" />
      <path d="M785 245l18 85-34 0z" fill="#1c1cee" />
      <text x="778" y="250" fill="#3c3cd8" fontSize="36" fontFamily="Liberation Sans">z</text>
      <path d="M862 475L1010 380" stroke="#e02020" strokeWidth="3" />
      <path d="M1085 335l-68 60-12-28z" fill="#e01c14" />
      <text x="1092" y="338" fill="#b83020" fontSize="36" fontFamily="Liberation Sans">x</text>
      <path d="M720 362l4 78 75-28-78-50M800 425l90-50" stroke="#7a4ac0" strokeWidth="2" />
      <path d="M730 440l70-40" stroke="#8a9a50" strokeWidth="2" />
      <path d="M900 380v65l-40 30" stroke="#c82020" strokeWidth="2" />
      <rect x="781" y="488" width="52" height="49" stroke="#8c8c8c" strokeWidth="2" />
    </g>

    {/* axis tripod */}
    <g fontSize="15" fontFamily="Liberation Sans">
      <path d="M414 921L437 908" stroke="#c02820" strokeWidth="1.5" />
      <path d="M414 921V905" stroke="#2030c8" strokeWidth="1.5" />
      <path d="M414 921L403 910" stroke="#208030" strokeWidth="1.5" />
      <text x="398" y="913" fill="#208030">y</text>
      <text x="415" y="908" fill="#2030c8">z</text>
      <text x="432" y="913" fill="#c02820">x</text>
    </g>

    {/* view cube */}
    <path d="M1581 106l4-5 4 5v8h-8z" fill="#cfd2dc" />
    <circle cx="1660" cy="182" r="2.5" fill="none" stroke="#d0d0d0" strokeWidth="1.6" />
    <ellipse cx="1615" cy="164" rx="30" ry="25" fill="#111111" stroke="#c6ced6" strokeWidth="6" />
    <ellipse cx="1615" cy="163" rx="25" ry="21" fill="none" stroke="#55595e" strokeWidth="2" />
    <path d="M1615 129l26 27-28 21-19-25z" fill="#e6e6e6" />
    <path d="M1594 152l21-2 26 6-28 21z" fill="#d6d6d6" />
    <circle cx="1613" cy="158" r="4" fill="#c0c0d0" />
    <path d="M1608 142l8-2M1622 142l5 5M1600 158l5 5M1622 164l6-4" stroke="#555555" strokeWidth="1.4" />
    <path d="M1586 141l-5-4M1641 141l5-4M1587 185l-6 6M1640 185l5 6" stroke="#cfcfcf" strokeWidth="5" strokeDasharray="1.5 1" />
  </ViewportArt>
);

const App: React.FC = () => {
  return (
    <Frame>
      <GlobalStyle />
      <TitleBar>
        <AppBadge>3</AppBadge>
        7-多孔纳米片-SciArts.max - Autodesk 3ds Max 2018
        <WindowControls>
          <WindowButton>
            <Minus size={16} color="#111111" strokeWidth={1.2} />
          </WindowButton>
          <WindowButton>
            <RestoreGlyph />
          </WindowButton>
          <WindowButton>
            <X size={18} color="#111111" strokeWidth={1} />
          </WindowButton>
        </WindowControls>
      </TitleBar>

      <MenuBar>
        {MENU.map((m) => (
          <MenuItem key={m} $wide={m === "Civil View"} $tuck={m === "Arnold"}>
            <Mixed text={m} />
          </MenuItem>
        ))}
        <MenuRight>
          <LoginBox>
            <svg width="18" height="20" viewBox="0 0 18 20">
              <circle cx="9" cy="6" r="4.5" fill="none" stroke="#222" strokeWidth="1.4" />
              <path d="M1 18c0-4 4-5 8-5s8 1 8 5z" fill="none" stroke="#222" strokeWidth="1.4" />
            </svg>
            登录
            <ArrowDown $color="#111111" />
          </LoginBox>
          <WorkspaceLabel>工作区:</WorkspaceLabel>
          <Combo $w={143} $h={24}>
            默认
            <ArrowDown />
          </Combo>
        </MenuRight>
      </MenuBar>

      <ToolbarRow>
        <Grip />
        <ToolButton><Icon name="undo" /></ToolButton>
        <ToolButton><Icon name="redo" /></ToolButton>
        <ToolSep $w={7} />
        <ToolButton><Icon name="link" /></ToolButton>
        <ToolButton><Icon name="unlink" /></ToolButton>
        <ToolButton><Icon name="bind" /></ToolButton>
        <ToolSep $w={8} />
        <ToolCombo $w={85}>
          全部
          <ArrowDown />
        </ToolCombo>
        <ToolButton><Icon name="select" /></ToolButton>
        <ToolButton><Icon name="byName" /></ToolButton>
        <ToolButton $fly><Icon name="region" /></ToolButton>
        <ToolButton><Icon name="crossing" /></ToolButton>
        <ToolSep $w={9} />
        <ToolButton $on><Icon name="move" /></ToolButton>
        <ToolButton><Icon name="rotate" /></ToolButton>
        <ToolButton $fly><Icon name="scale" /></ToolButton>
        <ToolButton $fly><Icon name="placement" /></ToolButton>
        <ToolCombo $w={85}>
          视图
          <ArrowDown />
        </ToolCombo>
        <ToolButton $fly><Icon name="pivot" /></ToolButton>
        <ToolSep $w={8} />
        <ToolButton><Icon name="manip" /></ToolButton>
        <ToolButton $on><Icon name="keyboard" /></ToolButton>
        <ToolSep $w={7} />
        <ToolButton $fly><Icon name="snap" /></ToolButton>
        <ToolButton><Icon name="angle" /></ToolButton>
        <ToolButton><Icon name="percent" /></ToolButton>
        <ToolButton><Icon name="spinner" /></ToolButton>
        <ToolSep $w={10} />
        <ToolButton><Icon name="named" /></ToolButton>
        <ToolCombo $w={146}>
          创建选择集
          <ArrowDown />
        </ToolCombo>
        <ToolSep $w={7} />
        <ToolButton><Icon name="mirror" /></ToolButton>
        <ToolButton $fly><Icon name="align" /></ToolButton>
        <ToolSep $w={8} />
        <ToolButton><Icon name="explorer" /></ToolButton>
        <ToolButton><Icon name="layers" /></ToolButton>
        <ToolSep $w={7} />
        <ToolButton $on><Icon name="ribbon" /></ToolButton>
        <ToolButton><Icon name="curve" /></ToolButton>
        <ToolButton><Icon name="schematic" /></ToolButton>
        <ToolSep $w={7} />
        <ToolButton $fly><Icon name="material" /></ToolButton>
        <ToolSep $w={7} />
        <ToolButton><Icon name="renderSetup" /></ToolButton>
        <ToolButton><Icon name="framebuffer" /></ToolButton>
        <ToolButton $fly><Icon name="renderProd" /></ToolButton>
        <ToolButton><Icon name="renderCloud" /></ToolButton>
        <ToolButton><Icon name="gallery" /></ToolButton>
      </ToolbarRow>

      <Workspace>
        <LeftPanel>
          <DottedRule />
          <LeftBody>
            <Rail>
              <RailStrip>
                <RailPlay />
              </RailStrip>
              <ViewPreview />
            </Rail>
            <Explorer>
              <ExplorerMenu>
                <span>选择</span>
                <span>显示</span>
                <span>编辑</span>
                <span>自定义</span>
              </ExplorerMenu>
              <SearchRow>
                <SearchInput />
                <ClearGlyph>
                  <X size={18} strokeWidth={3} />
                </ClearGlyph>
                <FilterButton>
                  <Icon name="filterPick" size={24} />
                </FilterButton>
                <Chevrons $gap={12}>»</Chevrons>
              </SearchRow>
              <TreeRow>
                <ToolColumn>
                  {CATEGORIES.map((c) => (
                    <CategoryButton key={c}>
                      <Icon name={c} size={22} />
                    </CategoryButton>
                  ))}
                  <CategoryRule />
                  <PlainCategory><Icon name="docFill" size={22} /></PlainCategory>
                  <PlainCategory><Icon name="blank" size={22} /></PlainCategory>
                  <PlainCategory><Icon name="docOutline" size={22} /></PlainCategory>
                  <CategoryRule />
                  <PlainCategory><Icon name="funnelGear" size={22} /></PlainCategory>
                  <PlainCategory><Icon name="funnel" size={22} /></PlainCategory>
                  <PlainCategory><Icon name="puzzle" size={22} /></PlainCategory>
                </ToolColumn>
                <SceneTable>
                  <TableHeader>
                    <HeaderName>名称(按升序排序)</HeaderName>
                    <HeaderFreeze>冻结</HeaderFreeze>
                  </TableHeader>
                  {ROWS.map((name, i) => {
                    const live = i < 2;
                    return (
                      <SceneRow key={name} $alt={i % 2 === 1} $selected={i === 1} $frozen={!live}>
                        <RowControls>
                          <svg width="20" height="14" viewBox="0 0 20 14">
                            <path d="M0 7c5-8 15-8 20 0-5 8-15 8-20 0z" fill={live ? "#d8d8d8" : "#2b2b2b"} />
                            {live && <circle cx="10" cy="7" r="4" fill="#333333" />}
                          </svg>
                          <Sphere />
                        </RowControls>
                        <RowName>{name}</RowName>
                        <RowFreeze>
                          <Snowflake size={16} color="#222222" strokeWidth={2} />
                        </RowFreeze>
                      </SceneRow>
                    );
                  })}
                </SceneTable>
              </TreeRow>
              <LayerFooter>
                <LayerInput>默认</LayerInput>
                <LayerArrow />
                <LayerIcon>
                  <Icon name="stack" size={22} />
                </LayerIcon>
                <Chevrons $gap={29}>»</Chevrons>
              </LayerFooter>
            </Explorer>
          </LeftBody>
        </LeftPanel>

        <Viewport>
          <Scene />
          <ViewportLabel>
            <Mixed text="[+] [透视] [标准] [边面]" />
          </ViewportLabel>
        </Viewport>

        <CommandPanel>
          <DottedRule />
          <CommandTabs>
            <CommandTab><Icon name="create" size={28} /></CommandTab>
            <CommandTab><Icon name="modify" size={28} /></CommandTab>
            <CommandTab><Icon name="hierarchy" size={28} /></CommandTab>
            <CommandTab><Icon name="motion" size={28} /></CommandTab>
            <CommandTab><Icon name="display" size={28} /></CommandTab>
            <CommandTab>
              <Wrench size={24} color={G} fill={G} />
            </CommandTab>
          </CommandTabs>
          <NameRow>
            <NameField>Box002</NameField>
            <Swatch />
          </NameRow>
          <ModifierCombo>
            <ArrowDown />
          </ModifierCombo>
          <ModifierList>
            <ModifierRows>
              {MODIFIERS.map((m) => (
                <ModifierRow key={m} $hot={m === "FFD 4x4x4"} $category={m === "对象空间修改器"}>
                  <Mixed text={m} />
                </ModifierRow>
              ))}
            </ModifierRows>
            <ScrollBar>
              <ScrollStart>
                <ChevronUp size={16} strokeWidth={2.4} />
              </ScrollStart>
              <ScrollThumb />
              <ScrollEnd>
                <ChevronDown size={16} strokeWidth={2.4} />
              </ScrollEnd>
            </ScrollBar>
          </ModifierList>
          <Pointer width="18" height="24" viewBox="0 0 18 24">
            <path d="M1 1v18l4.5-4 3.5 8 3-1.4-3.5-7.6H15z" fill="#ffffff" stroke="#222222" strokeWidth="1" />
          </Pointer>
        </CommandPanel>
      </Workspace>

      <TimelineWrap>
        <SliderRow>
          <SliderEnd><ChevronLeft size={15} strokeWidth={1.4} /></SliderEnd>
          <SliderBar>0 / 100</SliderBar>
          <SliderEnd><ChevronRight size={15} strokeWidth={1.4} /></SliderEnd>
        </SliderRow>
        <RulerRow>
          <RulerLead>
            <Icon name="wave" size={22} />
          </RulerLead>
          <RulerTrack>
            <RulerThumb />
            <RulerLabels>
              {Array.from({ length: 19 }, (_, i) => (
                <RulerLabel key={i}>{i * 5}</RulerLabel>
              ))}
            </RulerLabels>
          </RulerTrack>
        </RulerRow>
      </TimelineWrap>

      <StatusBar>
        <Listener>
          <ListenerTop />
          <ListenerBottom>"1111111111111</ListenerBottom>
        </Listener>
        <Prompt>
          <div>选择了 1 个 对象</div>
          <div>单击并拖动以选择并移动对象</div>
        </Prompt>
        <CoordColumn>
          <CoordRow>
            <CoordIcon><Icon name="isolate" size={22} /></CoordIcon>
            <CoordIcon><Icon name="lock" size={20} /></CoordIcon>
            <CoordIcon><Icon name="absolute" size={20} /></CoordIcon>
            <AxisLabel>X:</AxisLabel>
            <SpinInput>
              <SpinText>0.0mm</SpinText>
              <SpinArrows />
            </SpinInput>
            <AxisLabel>Y:</AxisLabel>
            <SpinInput>
              <SpinText>317.931mm</SpinText>
              <SpinArrows />
            </SpinInput>
            <AxisLabel>Z:</AxisLabel>
            <SpinInput>
              <SpinText>0.0mm</SpinText>
              <SpinArrows />
            </SpinInput>
            <GridText>
              <Mixed text="栅格 = 10.0mm" />
            </GridText>
          </CoordRow>
          <TagRow>
            <TagButton><Icon name="timeTag" size={20} /></TagButton>
            添加时间标记
          </TagRow>
        </CoordColumn>
        <PlaybackColumn>
          <PlaybackRow>
            <PlayButton><Icon name="toStart" size={20} /></PlayButton>
            <PlayDivider />
            <PlayButton><Icon name="prevFrame" size={20} /></PlayButton>
            <PlayButton $fly><Icon name="play" size={22} /></PlayButton>
            <PlayButton><Icon name="nextFrame" size={20} /></PlayButton>
            <PlayDivider />
            <PlayButton><Icon name="toEnd" size={20} /></PlayButton>
          </PlaybackRow>
          <PlaybackRow>
            <PlayButton><Icon name="keyMode" size={18} /></PlayButton>
            <SpinInput>
              <SpinText>0</SpinText>
              <SpinArrows />
            </SpinInput>
            <PlayDivider />
            <PlayButton><Icon name="timeConfig" size={22} /></PlayButton>
          </PlaybackRow>
        </PlaybackColumn>
        <BigKeyButton><Icon name="bigKey" size={44} /></BigKeyButton>
        <KeyColumn>
          <KeyButton>自动</KeyButton>
          <KeyButton>设置关键点</KeyButton>
        </KeyColumn>
        <KeyRight>
          <KeyTarget>选定对象</KeyTarget>
          <KeyFilterRow>
            <Icon name="tangent" size={26} />
            <KeyFilter>过滤器...</KeyFilter>
          </KeyFilterRow>
        </KeyRight>
        <NavGrid>
          <NavButton><Icon name="zoom" size={22} /></NavButton>
          <NavButton><Icon name="zoomAll" size={22} /></NavButton>
          <NavButton><Icon name="zoomExt" size={22} /></NavButton>
          <NavButton><Icon name="zoomExtAll" size={22} /></NavButton>
          <NavButton><Icon name="fov" size={20} /></NavButton>
          <NavButton><Icon name="pan" size={22} /></NavButton>
          <NavButton><Icon name="orbit" size={22} /></NavButton>
          <NavButton><Icon name="maximize" size={20} /></NavButton>
        </NavGrid>
      </StatusBar>

      <Watermark width="400" height="130" viewBox="0 0 400 130">
        <text
          x="18"
          y="114"
          fontFamily="Lato, sans-serif"
          fontSize="130"
          fill="#c9c8ec"
          stroke="#c9c8ec"
          strokeWidth="1.5"
          strokeLinejoin="round"
          textLength="362"
          lengthAdjust="spacingAndGlyphs"
        >
          SciArts
        </text>
      </Watermark>
    </Frame>
  );
};

export default App;
